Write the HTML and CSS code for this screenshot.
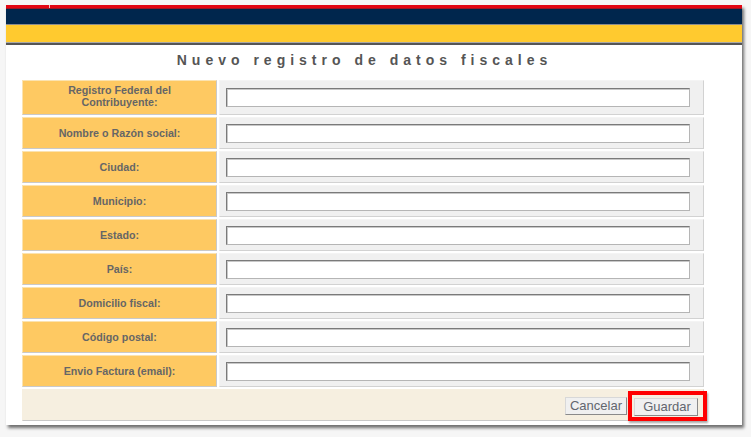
FILE: index.html
```html
<!DOCTYPE html>
<html lang="es">
<head>
<meta charset="utf-8">
<title>Nuevo registro de datos fiscales</title>
<link rel="stylesheet" href="styles.css">
</head>
<body>
<div class="panel">
  <div class="bar-red"><span class="tick"></span></div>
  <div class="bar-navy"></div>
  <div class="bar-yellow"></div>
  <div class="bar-dark"></div>
  <h1 class="title">Nuevo registro de datos fiscales</h1>
  <table class="form">
    <tr class="tall"><th>Registro Federal del<br>Contribuyente:</th><td><input class="field" type="text"></td></tr>
    <tr><th>Nombre o Razón social:</th><td><input class="field" type="text"></td></tr>
    <tr><th>Ciudad:</th><td><input class="field" type="text"></td></tr>
    <tr><th>Municipio:</th><td><input class="field" type="text"></td></tr>
    <tr><th>Estado:</th><td><input class="field" type="text"></td></tr>
    <tr><th>País:</th><td><input class="field" type="text"></td></tr>
    <tr><th>Domicilio fiscal:</th><td><input class="field" type="text"></td></tr>
    <tr><th>Código postal:</th><td><input class="field" type="text"></td></tr>
    <tr><th>Envio Factura (email):</th><td><input class="field" type="text"></td></tr>
    <tr class="foot"><td colspan="2">
      <div class="actions">
        <button class="btn" type="button">Cancelar</button>
        <span class="highlight"><button class="btn btn-save" type="button">Guardar</button></span>
      </div>
    </td></tr>
  </table>
</div>
</body>
</html>
```

FILE: styles.css
```css
html, body {
  margin: 0;
  padding: 0;
}
body {
  background: #f6f6f6;
  padding: 5px 0 0 6px;
  font-family: "Liberation Sans", Arial, sans-serif;
  height: 437px;
  box-sizing: border-box;
  overflow: hidden;
}
.panel {
  width: 736px;
  height: 420px;
  background: #ffffff;
  box-shadow: 2px 3px 3px rgba(0, 0, 0, 0.55);
  box-sizing: border-box;
  position: relative;
}
.bar-red {
  height: 3px;
  background: #e30613;
  border-bottom: 1px solid #a01622;
  position: relative;
}
.tick {
  position: absolute;
  left: 43px;
  top: 0;
  width: 1px;
  height: 3px;
  background: #f3c0c0;
}
.bar-navy {
  height: 15px;
  background: #00264d;
  border-bottom: 1px solid #8c8c8c;
}
.bar-yellow {
  height: 17px;
  background: #ffca2f;
  border-bottom: 1px solid #a8a8a8;
}
.bar-dark {
  height: 2px;
  background: #555555;
}
.title {
  margin: 7px 0 0 16px;
  width: 682px;
  height: 20px;
  text-align: center;
  font-size: 14px;
  font-weight: bold;
  letter-spacing: 5px;
  color: #555555;
  line-height: 16px;
  padding-left: 3px;
  box-sizing: border-box;
}
.form {
  margin: 6px 0 0 14px;
  border-collapse: separate;
  border-spacing: 2px;
  width: 686px;
}
.form th {
  width: 195px;
  height: 32px;
  padding: 0 4px;
  background: #fec962;
  border: 1px solid;
  border-color: #fbe3b0 #c9c9c9 #c9c9c9 #fbe3b0;
  font-size: 10.7px;
  font-weight: bold;
  color: #666666;
  text-align: center;
  line-height: 12px;
  box-sizing: border-box;
}
.form tr.tall th {
  height: 35px;
  padding-bottom: 3px;
}
.form td {
  background: #f0f0f0;
  border: 1px solid;
  border-color: #f4f4f4 #d2d2d2 #d2d2d2 #f4f4f4;
  padding: 0 0 0 6px;
  box-sizing: border-box;
}
.field {
  display: block;
  width: 464px;
  height: 19px;
  box-sizing: border-box;
  margin: 0;
  padding: 0 3px;
  background: #ffffff;
  border: 1px solid;
  border-color: #7a7a7a #b5b5b5 #b5b5b5 #7a7a7a;
  box-shadow: inset 1px 1px 0 #c8c8c8;
  font-family: "Liberation Sans", Arial, sans-serif;
  font-size: 12px;
}
.form tr.foot td {
  background: #f6efe0;
  height: 32px;
  border-color: #f6efe0 #d0d0d0 #c8c8c8 #f6efe0;
  padding: 0 5px 0 0;
}
.actions {
  display: flex;
  justify-content: flex-end;
  align-items: center;
  gap: 7px;
  padding-top: 2px;
}
.btn {
  height: 18px;
  padding: 0 4px;
  margin: 0;
  background: #f0f0f0;
  border: 1px solid;
  border-color: #d8d8d8 #8a8a8a #8a8a8a #d8d8d8;
  font-family: "Liberation Sans", Arial, sans-serif;
  font-size: 13px;
  color: #62666e;
  line-height: 16px;
  box-sizing: border-box;
}
.btn-save {
  width: 64px;
  padding: 0 0 0 2px;
}
.highlight {
  position: relative;
  display: inline-block;
}
.highlight::after {
  content: "";
  position: absolute;
  left: -6px;
  top: -6px;
  right: -9px;
  bottom: -5px;
  border: 4px solid #ff0000;
  box-shadow: 1px 2px 2px rgba(0, 0, 0, 0.35);
}
```
